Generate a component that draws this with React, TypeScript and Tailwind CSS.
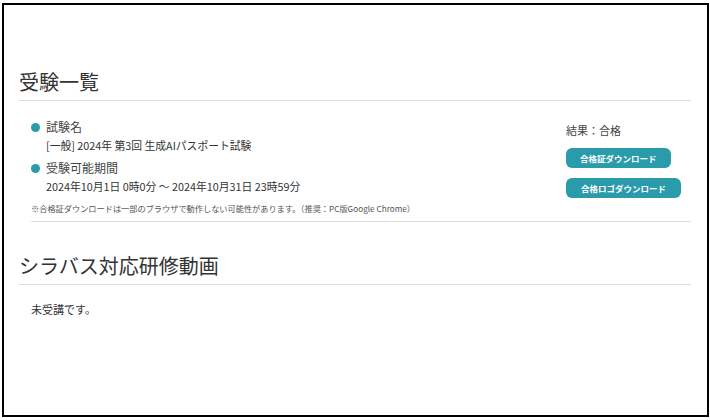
import React from 'react';

const font = { fontFamily: '"Noto Sans CJK JP", "Noto Sans", sans-serif' };

const Bullet: React.FC<{ label: string; value: string }> = ({ label, value }) => (
  <div>
    <div className="flex items-center h-[18px]">
      <span className="w-[9px] h-[9px] rounded-full bg-[#2a9bab] mr-[6px]" />
      <span className="text-[12px] text-[#444]">{label}</span>
    </div>
    <div className="pl-[15px] h-[18px] leading-[18px] text-[10.8px] text-[#333]">{value}</div>
  </div>
);

export default function App() {
  return (
    <div className="w-[710px] h-[420px] bg-white pt-[3px] pl-[2px]" style={font}>
      <div className="w-[707px] h-[414px] border-2 border-black pt-[62px] pl-[15px] pr-[16px]">
        {/* 受験一覧 */}
        <h2 className="text-[20px] leading-[30px] text-[#333] pb-[3px] border-b border-[#dedede]">受験一覧</h2>

        <div className="ml-[12px] mt-[17px] pb-[6px] border-b border-[#dedede]">
          <div className="flex justify-between">
            <div className="flex flex-col gap-[5px]">
              <Bullet label="試験名" value="[一般] 2024年 第3回 生成AIパスポート試験" />
              <Bullet label="受験可能期間" value="2024年10月1日 0時0分 ～ 2024年10月31日 23時59分" />
            </div>
            <div className="w-[125px] pt-[3px] flex flex-col items-start">
              <div className="text-[11px] leading-[18px] text-[#444]">結果：合格</div>
              <button className="mt-[9px] h-[20px] px-[14px] rounded-[6px] bg-[#2a9bab] text-white text-[8.5px] font-bold">
                合格証ダウンロード
              </button>
              <button className="mt-[10px] h-[20px] px-[15px] rounded-[6px] bg-[#2a9bab] text-white text-[8.5px] font-bold">
                合格ロゴダウンロード
              </button>
            </div>
          </div>
          <p className="mt-[3px] text-[8.2px] leading-[14px] text-[#555]">
            ※合格証ダウンロードは一部のブラウザで動作しない可能性があります。（推奨：PC版Google Chrome）
          </p>
        </div>

        {/* シラバス対応研修動画 */}
        <h2 className="mt-[29px] text-[20px] leading-[30px] text-[#333] pb-[3px] border-b border-[#dedede]">
          シラバス対応研修動画
        </h2>
        <p className="ml-[12px] mt-[15px] text-[11px] leading-[18px] text-[#333]">未受講です。</p>
      </div>
    </div>
  );
}
